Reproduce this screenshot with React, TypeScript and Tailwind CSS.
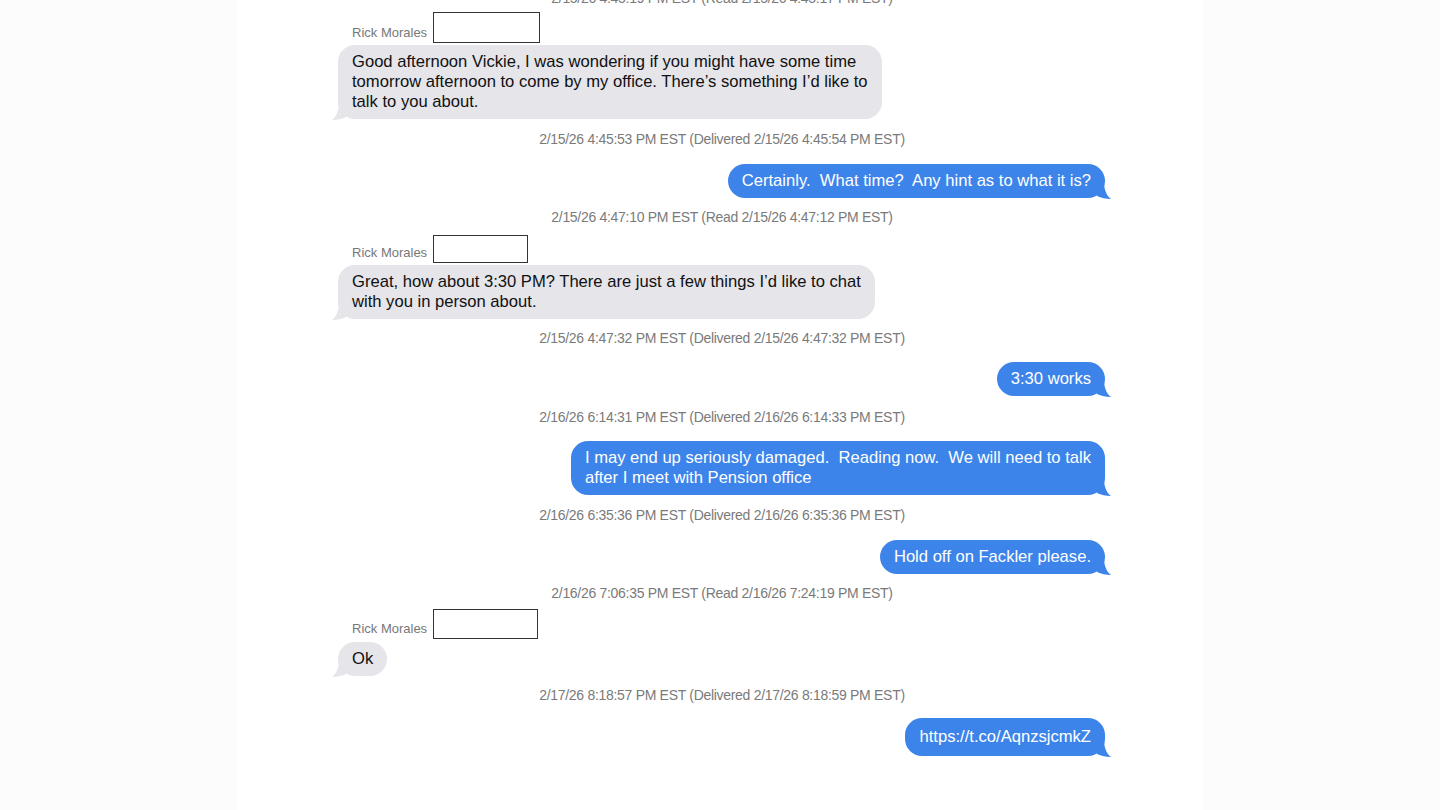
import React from 'react';

type Item =
  | { kind: 'ts'; text: string; mt: string }
  | { kind: 'sender'; box: string; mt: string }
  | { kind: 'in' | 'out'; lines: string[]; mt: string; pad?: string };

const items: Item[] = [
  { kind: 'ts', text: '2/15/26 4:45:19 PM EST (Read 2/15/26 4:45:17 PM EST)', mt: '-mt-[10px]' },
  { kind: 'sender', box: 'w-[107px] h-[31px]', mt: 'mt-[6px]' },
  {
    kind: 'in',
    mt: 'mt-[2px]',
    lines: [
      'Good afternoon Vickie, I was wondering if you might have some time',
      'tomorrow afternoon to come by my office. There\u2019s something I\u2019d like to',
      'talk to you about.',
    ],
  },
  { kind: 'ts', text: '2/15/26 4:45:53 PM EST (Delivered 2/15/26 4:45:54 PM EST)', mt: 'mt-[12px]' },
  { kind: 'out', mt: 'mt-[17px]', lines: ['Certainly.  What time?  Any hint as to what it is?'] },
  { kind: 'ts', text: '2/15/26 4:47:10 PM EST (Read 2/15/26 4:47:12 PM EST)', mt: 'mt-[11px]' },
  { kind: 'sender', box: 'w-[95px] h-[28px]', mt: 'mt-[10px]' },
  {
    kind: 'in',
    mt: 'mt-[2px]',
    lines: [
      'Great, how about 3:30 PM? There are just a few things I\u2019d like to chat',
      'with you in person about.',
    ],
  },
  { kind: 'ts', text: '2/15/26 4:47:32 PM EST (Delivered 2/15/26 4:47:32 PM EST)', mt: 'mt-[11px]' },
  { kind: 'out', mt: 'mt-[16px]', lines: ['3:30 works'] },
  { kind: 'ts', text: '2/16/26 6:14:31 PM EST (Delivered 2/16/26 6:14:33 PM EST)', mt: 'mt-[13px]' },
  {
    kind: 'out',
    mt: 'mt-[16px]',
    lines: [
      'I may end up seriously damaged.  Reading now.  We will need to talk',
      'after I meet with Pension office',
    ],
  },
  { kind: 'ts', text: '2/16/26 6:35:36 PM EST (Delivered 2/16/26 6:35:36 PM EST)', mt: 'mt-[12px]' },
  { kind: 'out', mt: 'mt-[17px]', lines: ['Hold off on Fackler please.'] },
  { kind: 'ts', text: '2/16/26 7:06:35 PM EST (Read 2/16/26 7:24:19 PM EST)', mt: 'mt-[11px]' },
  { kind: 'sender', box: 'w-[105px] h-[30px]', mt: 'mt-[8px]' },
  { kind: 'in', mt: 'mt-[3px]', lines: ['Ok'] },
  { kind: 'ts', text: '2/17/26 8:18:57 PM EST (Delivered 2/17/26 8:18:59 PM EST)', mt: 'mt-[11px]' },
  { kind: 'out', mt: 'mt-[15px]', pad: 'py-[9px]', lines: ['https://t.co/AqnzsjcmkZ'] },
];

function Tail({ side, color }: { side: 'left' | 'right'; color: string }) {
  const right = side === 'right';
  return (
    <svg
      width="14"
      height="18"
      viewBox="0 0 14 18"
      className={right ? 'absolute -right-[6px] bottom-[-1px]' : 'absolute -left-[6px] bottom-[-1px]'}
      style={right ? undefined : { transform: 'scaleX(-1)' }}
    >
      <path d="M0 0 L7 0 C7 8 9 14 14 18 C9 18 4 17 0 15 Z" fill={color} />
    </svg>
  );
}

function Bubble({ kind, lines, pad }: { kind: 'in' | 'out'; lines: string[]; pad?: string }) {
  const out = kind === 'out';
  return (
    <div className={out ? 'flex justify-end -mr-[1px]' : 'flex justify-start pl-[2px]'}>
      <div
        className={
          (out ? 'bg-[#3d84ea] text-white ' : 'bg-[#e5e5ea] text-[#111111] ') +
          'relative rounded-[17px] px-[14px] ' +
          (pad ?? 'py-[7px]') +
          ' text-[16.6px] leading-[20px] whitespace-pre'
        }
      >
        {lines.map((l, i) => (
          <div key={i} className="relative z-10">
            {l}
          </div>
        ))}
        <Tail side={out ? 'right' : 'left'} color={out ? '#3d84ea' : '#e5e5ea'} />
      </div>
    </div>
  );
}

export default function App() {
  return (
    <div className="w-full h-[810px] overflow-hidden bg-[#fcfcfc] flex justify-center" style={{ fontFamily: '"Liberation Sans", Arial, sans-serif' }}>
      <div className="w-[966px] h-full bg-white">
        <div className="w-[768px] mx-auto flex flex-col">
          {items.map((it, i) => {
            if (it.kind === 'ts') {
              return (
                <div key={i} className={it.mt + ' pl-[4px] text-center text-[14px] leading-[16px] text-[#7a7a7a] tracking-[-0.3px]'}>
                  {it.text}
                </div>
              );
            }
            if (it.kind === 'sender') {
              return (
                <div key={i} className={it.mt + ' flex items-end pl-[16px]'}>
                  <span className="text-[13px] leading-[16px] text-[#777777] mb-[2px] mr-[6px]">Rick Morales</span>
                  <div className={it.box + ' border border-[#333333] bg-white'} />
                </div>
              );
            }
            return (
              <div key={i} className={it.mt}>
                <Bubble kind={it.kind} lines={it.lines} pad={it.pad} />
              </div>
            );
          })}
        </div>
      </div>
    </div>
  );
}
